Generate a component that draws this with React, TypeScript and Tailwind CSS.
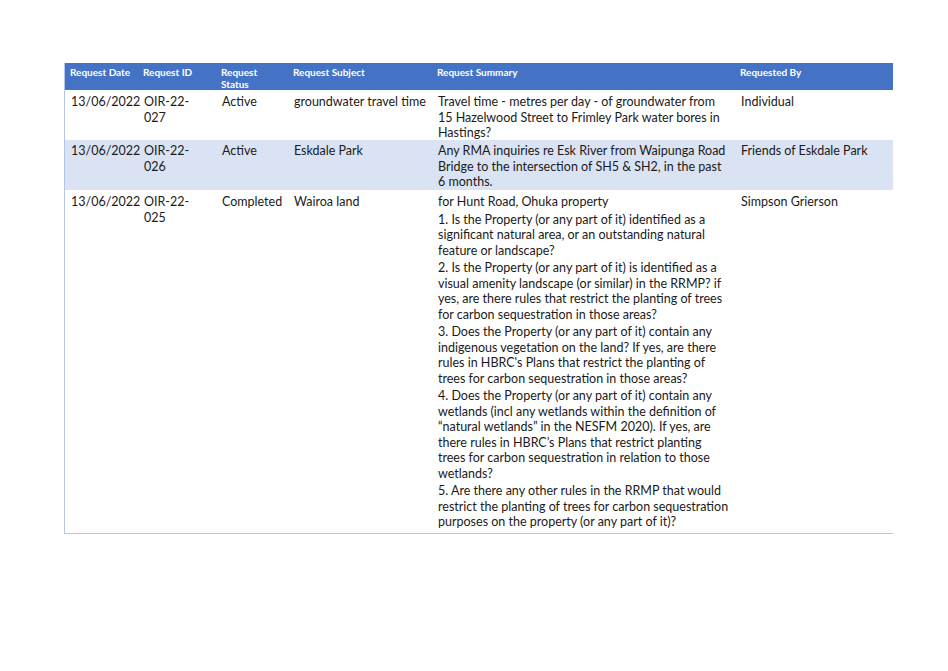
export default function App() {
  const cols = "grid grid-cols-[73px_78px_72px_144px_303px_159px]";
  const cell = "px-[6px] pt-[3px] pb-[3px]";
  const rows = [
    { d: "13/06/2022", id: "OIR-22-027", s: "Active", sub: "groundwater travel time", sum: ["Travel time - metres per day - of groundwater from 15 Hazelwood Street to Frimley Park water bores in Hastings?"], by: "Individual", bg: "bg-white", h: "h-[49px]" },
    { d: "13/06/2022", id: "OIR-22-026", s: "Active", sub: "Eskdale Park", sum: ["Any RMA inquiries re Esk River from Waipunga Road Bridge to the intersection of SH5 & SH2, in the past 6 months."], by: "Friends of Eskdale Park", bg: "bg-[#dae3f3]", h: "h-[51px]" },
    { d: "13/06/2022", id: "OIR-22-025", s: "Completed", sub: "Wairoa land", sum: [
      "for Hunt Road, Ohuka property",
      "1. Is the Property (or any part of it) identified as a significant natural area, or an outstanding natural feature or landscape?",
      "2. Is the Property (or any part of it) is identified as a visual amenity landscape (or similar) in the RRMP? if yes, are there rules  that restrict the planting of trees for carbon sequestration in those areas?",
      "3. Does the Property (or any part of it) contain any indigenous vegetation on the land? If yes, are there rules in HBRC's Plans that restrict the planting of trees for carbon sequestration in those areas?",
      "4. Does the Property (or any part of it) contain any wetlands (incl any wetlands within the definition of \u201cnatural wetlands\u201d in the NESFM 2020).  If yes, are there rules in HBRC\u2019s Plans that restrict planting trees for carbon sequestration in relation to those wetlands?",
      "5. Are there any other rules in the RRMP that would restrict the planting of trees for carbon sequestration purposes on the property (or any part of it)?",
    ], by: "Simpson Grierson", bg: "bg-white", h: "" },
  ];
  return (
    <div className="w-[948px] h-[671px] bg-white pt-[63px] pl-[64px]" style={{ fontFamily: "Lato, 'Noto Sans', sans-serif" }}>
      <div className="w-[829px] border-l border-b border-[#b4c6e7]">
        <div className={`${cols} bg-[#4472c4] text-white text-[10px] font-bold leading-[12px] h-[27px]`}>
          {["Request Date", "Request ID", "Request Status", "Request Subject", "Request Summary", "Requested By"].map((h, i) => (
            <div key={i} className="px-[5px] pt-[3px] whitespace-nowrap">{i === 2 ? <>Request<br />Status</> : h}</div>
          ))}
        </div>
        {rows.map((r, i) => (
          <div key={i} className={`${cols} ${r.bg} ${r.h} text-[12.5px] leading-[15.5px] text-[#1a1a1a] border-t border-white`}>
            <div className={cell}>{r.d}</div>
            <div className={cell}>{r.id}</div>
            <div className={cell}>{r.s}</div>
            <div className={`${cell} whitespace-nowrap`}>{r.sub}</div>
            <div className={`${cell} flex flex-col gap-[2px]`}>{r.sum.map((p, j) => <p key={j}>{p}</p>)}</div>
            <div className={cell}>{r.by}</div>
          </div>
        ))}
      </div>
    </div>
  );
}
